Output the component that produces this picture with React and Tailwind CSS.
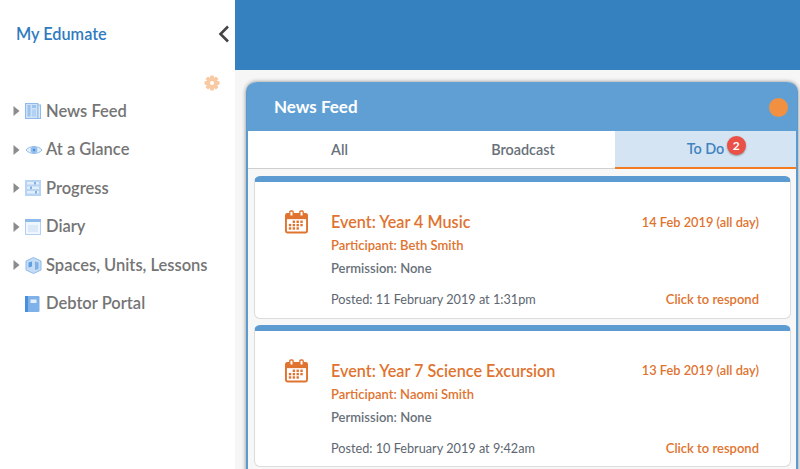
import React from 'react';

const NewsIcon = () => (
  <svg width="16" height="16" viewBox="0 0 16 16">
    <rect x="0.5" y="0.5" width="12.5" height="15" fill="#cfe2f7" stroke="#8fbbea" />
    <rect x="13" y="2" width="2.5" height="13.5" fill="#dbe9f9" stroke="#8fbbea" />
    <rect x="2.5" y="2" width="3" height="11.5" fill="#9cc3ee" />
    <rect x="7" y="2" width="4" height="3" fill="#9cc3ee" />
    <rect x="7" y="6.5" width="4" height="7" fill="#b3d1f2" />
  </svg>
);

const EyeIcon = () => (
  <svg width="18" height="16" viewBox="0 0 18 16">
    <path d="M1 8 C4 3.5 14 3.5 17 8 C14 12.5 4 12.5 1 8 Z" fill="#e6f0fb" stroke="#8fbbea" />
    <circle cx="9" cy="8" r="3.4" fill="#93bdec" />
    <circle cx="9" cy="8" r="1.2" fill="#4a8fdc" />
  </svg>
);

const ProgressIcon = () => (
  <svg width="16" height="16" viewBox="0 0 16 16">
    <rect x="0" y="0" width="16" height="16" fill="#b9d4f3" />
    <rect x="2" y="2" width="12" height="2.5" fill="#e3eefb" />
    <rect x="9" y="2" width="2" height="2.5" fill="#7fb0e8" />
    <rect x="2" y="6.5" width="12" height="2.5" fill="#e3eefb" />
    <rect x="5" y="6.5" width="2" height="2.5" fill="#7fb0e8" />
    <rect x="2" y="11" width="12" height="2.5" fill="#e3eefb" />
    <rect x="10" y="11" width="2" height="2.5" fill="#7fb0e8" />
  </svg>
);

const DiaryIcon = () => (
  <svg width="16" height="16" viewBox="0 0 16 16">
    <rect x="0.5" y="0.5" width="15" height="15" fill="#f0f6fd" stroke="#b3d1f2" />
    <rect x="0" y="0" width="16" height="3" fill="#8fbbea" />
    <rect x="3" y="6" width="10" height="7" fill="#dbe9f9" />
  </svg>
);

const SpacesIcon = () => (
  <svg width="17" height="17" viewBox="0 0 17 17">
    <path d="M8.5 0.5 L16 4 V13 L8.5 16.5 L1 13 V4 Z" fill="#c5dcf5" stroke="#8fbbea" />
    <path d="M3.5 5.5 L7 4.5 V9.5 L3.5 10.5 Z" fill="#5f9fe3" />
    <path d="M10 4.5 L13.5 5.5 V12 L10 13 Z" fill="#7fb0e8" />
  </svg>
);

const PortalIcon = () => (
  <svg width="15" height="16" viewBox="0 0 15 16">
    <rect x="0" y="0" width="14.5" height="16" rx="1" fill="#7fb2ea" />
    <rect x="0" y="0" width="3" height="16" fill="#4a8fdc" />
    <rect x="5.5" y="3.5" width="6" height="3.5" fill="#e6f0fb" />
  </svg>
);

const CalendarIcon = () => (
  <svg width="23" height="24" viewBox="0 0 24 24" className="shrink-0">
    <rect x="1" y="3.5" width="22" height="19.5" rx="1.5" fill="none" stroke="#e0732f" strokeWidth="2" />
    <rect x="1" y="3.5" width="22" height="5.5" fill="#e0732f" />
    <rect x="5" y="0.5" width="3.5" height="5.5" rx="1" fill="#fff" stroke="#e0732f" strokeWidth="1.4" />
    <rect x="15.5" y="0.5" width="3.5" height="5.5" rx="1" fill="#fff" stroke="#e0732f" strokeWidth="1.4" />
    <g fill="#e0732f">
      <rect x="8" y="10.5" width="2.5" height="2.5" />
      <rect x="12" y="10.5" width="2.5" height="2.5" />
      <rect x="16" y="10.5" width="2.5" height="2.5" />
      <rect x="4" y="14" width="2.5" height="2.5" />
      <rect x="8" y="14" width="2.5" height="2.5" />
      <rect x="12" y="14" width="2.5" height="2.5" />
      <rect x="16" y="14" width="2.5" height="2.5" />
      <rect x="4" y="17.5" width="2.5" height="2.5" />
      <rect x="8" y="17.5" width="2.5" height="2.5" />
      <rect x="12" y="17.5" width="2.5" height="2.5" />
    </g>
  </svg>
);

const GearIcon = () => (
  <svg width="16" height="16" viewBox="0 0 16 16">
    <g fill="#f9c9a3">
      <rect x="6" y="0.5" width="4" height="15" rx="1" />
      <rect x="0.5" y="6" width="15" height="4" rx="1" />
      <rect x="6" y="0.5" width="4" height="15" rx="1" transform="rotate(45 8 8)" />
      <rect x="6" y="0.5" width="4" height="15" rx="1" transform="rotate(-45 8 8)" />
      <circle cx="8" cy="8" r="5.5" />
    </g>
    <circle cx="8" cy="8" r="2" fill="#fff" />
  </svg>
);

const navItems = [
  { label: 'News Feed', icon: <NewsIcon />, arrow: true },
  { label: 'At a Glance', icon: <EyeIcon />, arrow: true },
  { label: 'Progress', icon: <ProgressIcon />, arrow: true },
  { label: 'Diary', icon: <DiaryIcon />, arrow: true },
  { label: 'Spaces, Units, Lessons', icon: <SpacesIcon />, arrow: true },
  { label: 'Debtor Portal', icon: <PortalIcon />, arrow: false },
];

const events = [
  {
    title: 'Event: Year 4 Music',
    date: '14 Feb 2019 (all day)',
    participant: 'Participant: Beth Smith',
    posted: 'Posted: 11 February 2019 at 1:31pm',
  },
  {
    title: 'Event: Year 7 Science Excursion',
    date: '13 Feb 2019 (all day)',
    participant: 'Participant: Naomi Smith',
    posted: 'Posted: 10 February 2019 at 9:42am',
  },
];

const EventCard = ({ event }) => (
  <div className="h-[142.5px] shrink-0 mb-[6px] rounded-[6px] bg-white border-x border-b border-[#dcdcdc] border-t-[6px] border-t-[#5b9bd1] pl-[30px] pr-[31px] pt-[28.3px] flex">
    <div className="w-[46px] shrink-0">
      <CalendarIcon />
    </div>
    <div className="flex-1">
      <div className="flex justify-between items-center h-[24px]">
        <span className="text-[16.2px] font-semibold text-[#e0732f]">{event.title}</span>
        <span className="text-[12.8px] font-semibold text-[#e0732f]">{event.date}</span>
      </div>
      <div className="text-[13px] font-semibold text-[#e0732f] h-[23px] leading-[23px]">{event.participant}</div>
      <div className="text-[13px] font-semibold text-[#68717a] h-[23px] leading-[23px]">Permission: None</div>
      <div className="flex justify-between items-center mt-[8px] h-[23px] text-[12.7px]">
        <span className="text-[#5d6670]">{event.posted}</span>
        <span className="text-[13px] font-semibold text-[#e0732f]">Click to respond</span>
      </div>
    </div>
  </div>
);

export default function App() {
  return (
    <div className="w-[800px] h-[469px] overflow-hidden flex bg-[#f6f6f6] font-['Lato','Liberation_Sans',sans-serif]">
      {/* Sidebar */}
      <div className="w-[235px] shrink-0 bg-white">
        <div className="h-[68px] pl-[16px] pr-[5px] flex items-center justify-between">
          <span className="text-[16.3px] font-semibold text-[#2f7bc0]">My Edumate</span>
          <svg width="12" height="18" viewBox="0 0 12 18">
            <path d="M10 1.5 L2.5 9 L10 16.5" fill="none" stroke="#444" strokeWidth="2.6" />
          </svg>
        </div>
        <div className="flex justify-end pr-[15px] mt-[7px] h-[16px]">
          <GearIcon />
        </div>
        <div className="mt-[1px]">
          {navItems.map((item) => (
            <div key={item.label} className="h-[38.5px] pl-[13px] flex items-center">
              <span className="w-[12px] shrink-0">
                {item.arrow && (
                  <svg width="7" height="10" viewBox="0 0 7 10">
                    <path d="M0.5 0 L6.5 5 L0.5 10 Z" fill="#8c8c8c" />
                  </svg>
                )}
              </span>
              <span className="w-[21px] shrink-0 flex items-center">{item.icon}</span>
              <span className="text-[16.5px] font-semibold text-[#757575] whitespace-nowrap">{item.label}</span>
            </div>
          ))}
        </div>
      </div>

      {/* Main */}
      <div className="flex-1 min-w-0">
        <div className="h-[70px] bg-[#3580bf]" />
        <div className="pl-[11px] pr-[2px] pt-[12px]">
          <div className="h-[400px] rounded-t-[10px] border-x-2 border-[#5b9bd1] bg-[#f7f7f7] shadow-[0_0_4px_rgba(0,0,0,0.45)]">
            <div className="h-[49px] -mx-px rounded-t-[10px] bg-[#5f9fd4] pl-[27px] pr-[9px] flex items-center justify-between">
              <span className="text-[17px] font-bold text-white">News Feed</span>
              <span className="w-[19px] h-[19px] rounded-full bg-[#f29042] mt-[2px]" />
            </div>
            <div className="h-[38px] flex bg-white border-b border-[#cfcfcf]">
              <div className="w-[183px] flex items-center justify-center text-[14.4px] font-semibold text-[#68717a]">All</div>
              <div className="w-[184px] flex items-center justify-center text-[14.4px] font-semibold text-[#68717a]">Broadcast</div>
              <div className="flex-1 -mb-px bg-[#d5e4f2] border-b-2 border-[#f37c21] flex items-center justify-center text-[14.4px] font-semibold text-[#3f83c0]">
                <span className="relative">
                  To Do
                  <span className="absolute left-[40px] -top-[2px] w-[19px] h-[19px] rounded-full bg-[#ea5045] text-white text-[12px] font-bold flex items-center justify-center shadow-[0_1px_2px_rgba(0,0,0,0.35)]">2</span>
                </span>
              </div>
            </div>
            <div className="pl-[6px] pr-[5px] pt-[7px] flex flex-col">
              {events.map((event) => (
                <EventCard key={event.title} event={event} />
              ))}
            </div>
          </div>
        </div>
      </div>
    </div>
  );
}
